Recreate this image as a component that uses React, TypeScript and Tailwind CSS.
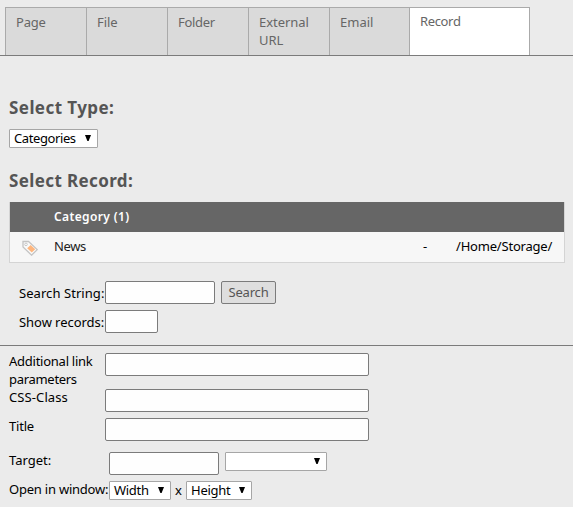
import React from "react";

const tabs = [
  { label: "Page", width: "w-[81px]", tracking: "tracking-[-0.2px]" },
  { label: "File", width: "w-[81px]", tracking: "tracking-[-0.1px]" },
  { label: "Folder", width: "w-[81px]", tracking: "tracking-[-0.3px]" },
  { label: "External URL", width: "w-[81px]", tracking: "tracking-[-0.05px]" },
  { label: "Email", width: "w-[80px]", tracking: "tracking-[0px]" },
];

function Field({ className }: { className: string }) {
  return <input className={`block h-[23px] shrink-0 rounded-[2px] border border-[#7b7b7b] bg-[#fefefe] px-1 ${className}`} />;
}

function Select({ label = "", className }: { label?: string; className: string }) {
  return (
    <button className={`flex h-[19px] shrink-0 items-center justify-between rounded-[1px] border border-[#a6a6a6] bg-white pl-[4px] pr-[6px] text-black ${className}`}>
      <span className="leading-[17px]">{label}</span>
      <svg className="mb-[2px] h-[6px] w-[6px]" viewBox="0 0 6 6"><path d="M0 0H6L3.6 6H2.4Z" fill="#000" /></svg>
    </button>
  );
}

function TagIcon() {
  return (
    <svg className="h-4 w-4" viewBox="0 0 16 16" fill="none">
      <path d="M1 1.5H6.5L15.2 9.6L9.6 15.2L1 7Z" fill="#fafafa" stroke="#c4c4c4" strokeWidth="1.3" />
      <path d="M8.6 4.9L13.2 9.3L9.8 12.6L5.2 8.2Z" fill="#ffb67d" />
      <circle cx="4" cy="4.4" r="1.3" fill="#fff" stroke="#c8c8c8" />
    </svg>
  );
}

export default function App() {
  return (
    <div className="h-[507px] w-[573px] overflow-hidden bg-[#ebebeb] font-['Noto_Sans',sans-serif] text-[13px] leading-[18px] text-black">
      <nav className="flex h-[56px] border-b border-[#7b7b7b] pl-[5px] pt-[7px] text-[#666]">
        {tabs.map((t) => (
          <div key={t.label} className={`border-l border-t border-[#aaa] bg-[#dadada] pl-[10px] pr-2 pt-[5px] ${t.width} ${t.tracking}`}>{t.label}</div>
        ))}
        <div className="w-[121px] border-x border-t border-[#aaa] bg-white pl-[10px] pt-[4px] tracking-[-0.35px]">Record</div>
      </nav>

      <main className="pl-[9px] pr-[8px] pt-[41px]">
        <h2 className="h-[32px] text-[17px] font-bold leading-[22px] tracking-[0.43px] text-[#555]">Select Type:</h2>
        <Select label="Categories" className="w-[89px] tracking-[-0.4px]" />
        <h2 className="mt-[22px] h-[32px] text-[17px] font-bold leading-[22px] tracking-[0.38px] text-[#555]">Select Record:</h2>
        <section className="h-[61px] border-x border-b border-[#d4d4d4] bg-[#f7f7f7]">
          <div className="h-[30px] bg-[#666] pl-[44px] text-[12px] font-semibold leading-[29px] tracking-[0.38px] text-white">Category (1)</div>
          <div className="flex h-[28px] items-center">
            <div className="w-[44px] pl-[12px] pt-[3px]"><TagIcon /></div>
            <span className="w-[369px] tracking-[-0.4px] text-[#222]">News</span>
            <span className="w-[33px]">-</span>
            <span className="tracking-[-0.2px]">/Home/Storage/</span>
          </div>
        </section>
      </main>

      <section className="flex h-[82px] flex-col gap-[6px] pl-[19px] pt-[18px]">
        <div className="flex h-[23px]">
          <label className="w-[86px] shrink-0 whitespace-nowrap pt-[3px] tracking-[0.06px]">Search String:</label>
          <Field className="w-[110px]" />
          <button className="ml-[6px] h-[23px] w-[55px] rounded-[2px] border border-[#7b7b7b] bg-[#dedede] leading-[21px] tracking-[-0.2px] text-[#555]">Search</button>
        </div>
        <div className="flex h-[23px]">
          <label className="w-[86px] shrink-0 whitespace-nowrap pt-[3px] tracking-[-0.05px]">Show records:</label>
          <Field className="w-[53px]" />
        </div>
      </section>

      <section className="h-[162px] border-t border-[#7b7b7b] pl-[9px] pt-[7px]">
        <div className="flex h-[36px]">
          <label className="mt-[-1px] w-[96px] tracking-[-0.25px]">Additional link <span className="tracking-[-0.3px]">parameters</span></label>
          <Field className="w-[264px]" />
        </div>
        <div className="flex h-[29px]"><label className="mt-[-1px] w-[96px] tracking-[0.1px]">CSS-Class</label><Field className="w-[264px]" /></div>
        <div className="flex h-[34px]"><label className="mt-[-1px] w-[96px] tracking-[-0.2px]">Title</label><Field className="w-[264px]" /></div>
        <div className="flex h-[29px]">
          <label className="mt-[-1px] w-[100px]">Target:</label><Field className="w-[110px]" /><Select className="ml-[6px] w-[102px]" />
        </div>
        <div className="flex">
          <label className="mt-[-1px] w-[100px] shrink-0 whitespace-nowrap tracking-[-0.22px]">Open in window:</label>
          <Select label="Width" className="w-[62px] tracking-[-0.3px]" />
          <span className="w-[15px] text-center">x</span>
          <Select label="Height" className="w-[66px] tracking-[-0.25px]" />
        </div>
      </section>
    </div>
  );
}
